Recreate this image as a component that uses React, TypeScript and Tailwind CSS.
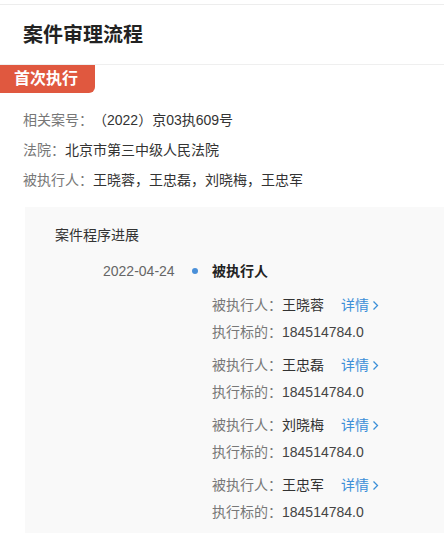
import React from "react";

const font = { fontFamily: '"Liberation Sans", "Noto Sans CJK SC", sans-serif' };

const people = ["王晓蓉", "王忠磊", "刘晓梅", "王忠军"];

const Chevron = () => (
  <svg width="7" height="11" viewBox="0 0 7 11" className="ml-[3px]">
    <polyline points="1.5,1.5 5.5,5.5 1.5,9.5" fill="none" stroke="#3b8fd8" strokeWidth="1.3" />
  </svg>
);

const App = () => {
  return (
    <div className="w-[444px] h-[533px] overflow-hidden bg-white [text-spacing-trim:space-all]" style={font}>
      {/* Top separator */}
      <div className="h-[5px] border-b border-[#ededed]" />

      {/* Title */}
      <div className="h-[60px] flex items-center pl-[23px] border-b border-[#efefef]">
        <h1 className="text-[20px] font-bold text-[#222]">案件审理流程</h1>
      </div>

      {/* Tab */}
      <div className="h-[28px] w-[95px] bg-[#e0583f] rounded-br-[6px] flex items-center pl-[14px]">
        <span className="text-white text-[16px] font-bold">首次执行</span>
      </div>

      {/* Info */}
      <div className="mt-[12px] pl-[23px] text-[14px] leading-[30px]">
        <div>
          <span className="text-[#777]">相关案号：</span>
          <span className="text-[#333]">（2022）京03执609号</span>
        </div>
        <div>
          <span className="text-[#777]">法院：</span>
          <span className="text-[#333]">北京市第三中级人民法院</span>
        </div>
        <div>
          <span className="text-[#777]">被执行人：</span>
          <span className="text-[#333]">王晓蓉，王忠磊，刘晓梅，王忠军</span>
        </div>
      </div>

      {/* Progress panel */}
      <div className="mt-[12px] ml-[25px] bg-[#f9f9f9] pt-[18px] pb-[20px]">
        <div className="pl-[30px] text-[14px] leading-[20px] text-[#333]">案件程序进展</div>

        <div className="mt-[16px] flex items-center text-[14px] leading-[20px]">
          <span className="pl-[78px] w-[167px] text-[#666]">2022-04-24</span>
          <span className="w-[6px] h-[6px] rounded-full bg-[#4a90d9]" />
          <span className="ml-[14px] font-bold text-[#222]">被执行人</span>
        </div>

        <div className="mt-[11px] pl-[187px] flex flex-col gap-[6px] text-[14px] leading-[27px]">
          {people.map((p) => (
            <div key={p}>
              <div className="flex items-center">
                <span className="text-[#777]">被执行人：</span>
                <span className="text-[#333]">{p}</span>
                <span className="ml-[17px] text-[#3b8fd8]">详情</span>
                <Chevron />
              </div>
              <div>
                <span className="text-[#777]">执行标的：</span>
                <span className="text-[#444]">184514784.0</span>
              </div>
            </div>
          ))}
        </div>
      </div>
    </div>
  );
};

export default App;
